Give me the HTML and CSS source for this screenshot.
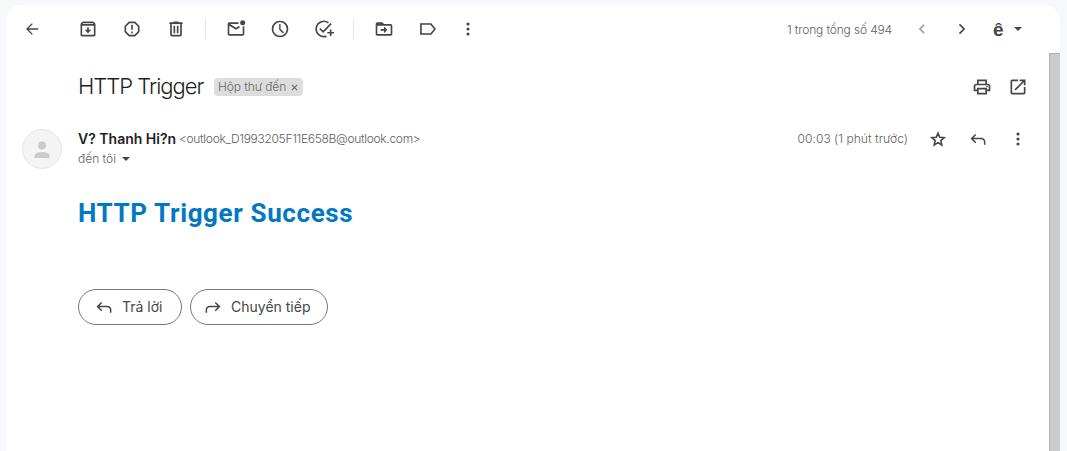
FILE: index.html
```html
<!DOCTYPE html>
<html lang="vi">
<head>
<meta charset="utf-8">
<title>HTTP Trigger</title>
<link rel="stylesheet" href="styles.css">
</head>
<body>
<main class="panel">
  <header class="toolbar">
    <span class="btn back"><svg class="icon" viewBox="0 0 24 24"><path d="M19.500 11.100H8l5-5L11.800 5l-7 7 7 7 1.200-1.100-5-5h11.500z"/></svg></span>
    <span class="btn"><svg class="icon" viewBox="0 0 24 24"><path d="M20.500 5.200 19.200 3.500Q18.800 3 18 3H6q-.8 0-1.200.5L3.500 5.200Q3 5.700 3 6.500V19q0 2 2 2h14q2 0 2-2V6.500q0-.8-.5-1.300zM6.200 5h11.600l.8 1H5.400zM5 19V8h14v11z"/><path d="M11 10h2v3h3l-4 4-4-4h3z"/></svg></span>
    <span class="btn"><svg class="icon" viewBox="0 0 24 24"><path d="M15.700 3H8.300L3 8.300v7.400L8.300 21h7.400l5.300-5.300V8.300zM19 14.900 14.900 19H9.100L5 14.900V9.100L9.100 5h5.800L19 9.100z"/><path d="M11 7h2v6h-2zM11 15h2v2h-2z"/></svg></span>
    <span class="btn"><svg class="icon" viewBox="0 0 24 24"><path d="M15 4V3H9v1H4v2h1v13q0 2 2 2h10q2 0 2-2V6h1V4zm2 15H7V6h10zM9 8h2v9H9zm4 0h2v9h-2z"/></svg></span>
    <span class="rule"></span>
    <span class="btn"><svg class="icon" viewBox="0 0 24 24"><path d="M22 8.500V18q0 2-2 2H4q-2 0-2-2V6q0-2 2-2h11v2H5l7 4.500 3.500-2.200 1.500 1.500-5 3.200-8-5V18h16V9z"/><circle cx="20" cy="4.500" r="3"/></svg></span>
    <span class="btn"><svg class="icon" viewBox="0 0 24 24"><path d="M12 2a10 10 0 1 0 0 20 10 10 0 0 0 0-20zm0 18a8 8 0 1 1 0-16 8 8 0 0 1 0 16z"/><path d="M11 6h1.700v6l4 4-1.200 1.300L11 12.800z"/></svg></span>
    <span class="btn"><svg class="icon snooze" viewBox="0 0 24 24"><path class="line" d="M17.300 4.600A9.200 9.200 0 1 0 15 20.600M7 11.500l4 4L20.500 5.500M20 12.500v8M16 16.500h8"/></svg></span>
    <span class="rule"></span>
    <span class="btn"><svg class="icon" viewBox="0 0 24 24"><path d="M20 6h-8l-2-2H4Q2 4 2 6v12q0 2 2 2h16q2 0 2-2V8q0-2-2-2zm0 12H4V8h16z"/><path d="M12 9l4 4-4 4v-3H8v-2h4z"/></svg></span>
    <span class="btn"><svg class="icon" viewBox="0 0 24 24"><path class="line" d="M3.500 6H15.500L20.300 12l-4.800 6H3.500z"/></svg></span>
    <span class="btn more"><svg class="icon" viewBox="0 0 24 24"><circle cx="12" cy="6" r="1.900"/><circle cx="12" cy="12" r="1.900"/><circle cx="12" cy="18" r="1.900"/></svg></span>
    <span class="count">1 trong tổng số 494</span>
    <span class="btn nav muted"><svg class="icon" viewBox="0 0 24 24"><path class="line" d="M14.500 7 9.500 12l5 5"/></svg></span>
    <span class="btn nav"><svg class="icon" viewBox="0 0 24 24"><path class="line" d="M9 6.500l5.500 5.500L9 17.500"/></svg></span>
    <span class="input-tool"><b class="glyph">ê</b><i class="caret"></i></span>
  </header>
  <div class="content">
    <section class="message">
      <div class="subject-row">
        <h1 class="subject">HTTP Trigger</h1>
        <span class="label"><span class="label-text">Hộp thư đến</span><svg class="close" viewBox="0 0 8 8"><path d="M1 1l6 6M7 1 1 7"/></svg></span>
        <span class="actions">
          <svg class="icon" viewBox="0 0 24 24"><path d="M19 8h-1V3H6v5H5q-3 0-3 3v6h4v4h12v-4h4v-6q0-3-3-3zM8 5h8v3H8zm8 14H8v-4h8zm4-4h-2v-2H6v2H4v-4q0-1 1-1h14q1 0 1 1z"/><circle cx="18" cy="11.500" r="1"/></svg>
          <svg class="icon" viewBox="0 0 24 24"><path d="M19 19H5V5h7V3H5Q3 3 3 5v14q0 2 2 2h14q2 0 2-2v-7h-2zM14 3v2h3.600l-9.800 9.800 1.400 1.400L19 6.400V10h2V3z"/></svg>
        </span>
      </div>
      <div class="sender-row">
        <svg class="avatar" viewBox="0 0 40 40"><circle class="avatar-bg" cx="20" cy="20" r="19.500"/><circle class="person" cx="20" cy="16.500" r="4"/><path class="person" d="M12.500 29v-2.300q0-2 2.200-2.800 5.300-2 10.600 0 2.200.8 2.200 2.800V29z"/></svg>
        <div class="who">
          <div class="from"><b class="name">V? Thanh Hi?n</b><span class="email">&lt;outlook_D1993205F11E658B@outlook.com&gt;</span></div>
          <div class="to"><span class="to-text">đến tôi</span><i class="caret"></i></div>
        </div>
        <span class="time">00:03 (1 phút trước)</span>
        <span class="actions">
          <svg class="icon star" viewBox="0 0 24 24"><path class="line" d="M12 5l2.100 5 5.300.4-4 3.500 1.200 5.300L12 16.400l-4.600 2.800 1.200-5.300-4-3.500 5.300-.4z"/></svg>
          <svg class="icon" viewBox="0 0 24 24"><path class="line thin" d="M9.300 6.500l-5 5 5 5M4.700 11.500H15.500q4.500 0 4.500 4.500v3"/></svg>
          <svg class="icon" viewBox="0 0 24 24"><circle cx="12" cy="6" r="1.900"/><circle cx="12" cy="12" r="1.900"/><circle cx="12" cy="18" r="1.900"/></svg>
        </span>
      </div>
      <h2 class="body-title">HTTP Trigger Success</h2>
      <div class="replies">
        <span class="pill reply"><svg class="icon" viewBox="0 0 24 24"><path class="line thin" d="M9.300 6.500l-5 5 5 5M4.700 11.500H15.500q4.500 0 4.500 4.500v3"/></svg><span class="pill-text">Trả lời</span></span>
        <span class="pill forward"><svg class="icon" viewBox="0 0 24 24"><path class="line thin" d="M14.700 6.500l5 5-5 5M19.300 11.500H8.500Q4 11.500 4 16v3"/></svg><span class="pill-text">Chuyển tiếp</span></span>
      </div>
    </section>
    <div class="scrollbar"></div>
  </div>
</main>
</body>
</html>
```
FILE: styles.css
```css
* { box-sizing: border-box; }
body {
  margin: 0;
  height: 451px;
  padding: 5px 7px 0 6px;
  overflow: hidden;
  background: #f6f8fc;
  color: #444746;
  font-family: Inter, "Noto Sans", sans-serif;
  white-space: nowrap;
}
.panel {
  height: 446px;
  display: flex;
  flex-direction: column;
  background: #fff;
  border-radius: 16px 16px 0 0;
  overflow: hidden;
}
.toolbar { height: 48px; flex: none; display: flex; align-items: center; padding: 0 30px 0 6px; }
.btn { width: 44px; display: flex; justify-content: center; flex: none; }
.back { width: 40px; margin-right: 14px; }
.more { width: 36px; }
.nav { width: 40px; }
.muted { opacity: .5; }
.rule { width: 1px; height: 20px; margin: 0 8px 0 7px; background: #e4e6e8; flex: none; }
.icon { width: 20px; height: 20px; flex: none; fill: #444746; display: block; overflow: visible; }
.icon .line { fill: none; stroke: #444746; stroke-width: 2; }
.icon .thin { stroke-width: 1.800; }
.icon.star .line { stroke-width: 1.900; }
.count { margin-left: auto; margin-right: 10px; font-size: 12px; font-weight: 300; color: #5e5e5e; letter-spacing: -.15px; }
.input-tool { width: 48px; display: flex; align-items: center; padding-left: 11px; }
.glyph { width: 12px; padding-top: 2px; font: bold 19px/20px "Liberation Sans", sans-serif; }
.caret { width: 8px; height: 4px; background: #444746; clip-path: polygon(0 0, 100% 0, 50% 100%); }
.input-tool .caret { margin-left: 9px; }
.content { flex: 1; display: flex; }
.message { flex: 1; }
.scrollbar { width: 11px; background: #cbcbcb; border-left: 1px solid #b0b0b0; border-top: 1px solid #b0b0b0; }
.subject-row { height: 68px; display: flex; align-items: center; padding: 0 21px 0 72px; }
.subject { margin: 0; width: 136px; padding-bottom: 2px; font-size: 22px; line-height: 28px; font-weight: 300; color: #1f1f1f; letter-spacing: -1px; }
.label { width: 89px; height: 18px; display: flex; align-items: center; padding-left: 4px; border-radius: 4px; background: #ddd; color: #666; font-size: 12px; font-weight: 300; }
.label-text { width: 73px; padding-bottom: 1px; letter-spacing: -.1px; }
.close { width: 7px; height: 7px; margin-top: 1px; stroke: #666; stroke-width: 1.300; }
.actions { display: flex; }
.subject-row .actions { gap: 16px; margin-left: auto; }
.sender-row { height: 52px; display: flex; padding: 8px 21px 0 16px; }
.avatar { width: 40px; height: 40px; flex: none; }
.avatar-bg { fill: #f4f4f4; stroke: #ddd; stroke-width: .7; }
.person { fill: #cbcbcb; }
.who { margin-left: 16px; }
.from { height: 20px; line-height: 20px; display: flex; }
.name { width: 101px; font-size: 14px; font-weight: 600; color: #1f1f1f; }
.email { font-size: 12px; font-weight: 300; color: #5e5e5e; letter-spacing: -.31px; }
.to { height: 20px; display: flex; align-items: center; font-size: 12px; font-weight: 300; color: #5e5e5e; }
.to-text { width: 44px; padding-bottom: 2px; }
.time { margin-left: auto; margin-right: 20px; line-height: 20px; font-size: 12px; font-weight: 300; color: #5e5e5e; letter-spacing: .04px; }
.sender-row .actions { gap: 20px; }
.body-title { margin: 22px 0 0 72px; font: bold 26px/36px Roboto, Arial, sans-serif; color: #0078c4; letter-spacing: .63px; }
.replies { margin: 58px 0 0 72px; display: flex; gap: 8px; }
.pill { height: 36px; border: 1px solid #747775; border-radius: 18px; display: flex; align-items: center; font-size: 14px; padding-left: 15px; }
.reply { width: 104px; }
.forward { width: 138px; padding-left: 12px; }
.pill-text { margin-left: 8px; padding-bottom: 2px; }
```
